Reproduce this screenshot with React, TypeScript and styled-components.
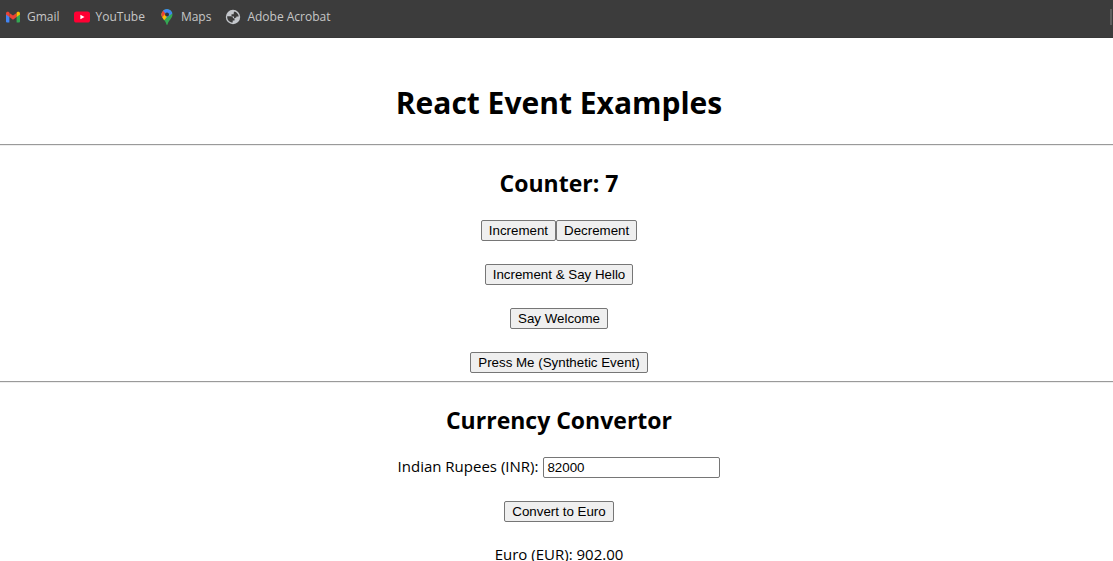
import React, { useState } from "react";
import styled, { createGlobalStyle } from "styled-components";

const GlobalStyle = createGlobalStyle`
  * { box-sizing: border-box; }
  body {
    margin: 0;
    background: #fff;
    color: #000;
    font-family: "Open Sans", "Noto Sans", sans-serif;
    font-size: 15px;
    line-height: 18px;
  }
`;

const BookmarksBar = styled.nav`
  display: flex;
  align-items: flex-start;
  justify-content: space-between;
  height: 38px;
  padding: 9px 1px 0 5px;
  background: #3c3c3c;
  border-bottom: 1px solid #383838;
`;

const BookmarkList = styled.div`
  display: flex;
  gap: 14px;
`;

const Bookmark = styled.a`
  display: flex;
  align-items: center;
  gap: 6px;
  height: 16px;
  color: #c7c7c7;
  font-family: "Open Sans", "Noto Sans", sans-serif;
  font-size: 12px;
  line-height: 16px;
  text-decoration: none;
  white-space: nowrap;

  svg { flex: none; }
`;

const BarDivider = styled.span`
  width: 2px;
  height: 16px;
  background: #5e5e5e;
`;

const Page = styled.main`
  padding-top: 43px;
`;

const Content = styled.div`
  display: flex;
  flex-direction: column;
  align-items: center;
  padding-left: 5px;
`;

const Title = styled.h1`
  margin: 0 0 19px;
  font-size: 30px;
  line-height: 44px;
`;

const Heading = styled.h2`
  margin: 0 0 21px;
  font-size: 23px;
  line-height: 32px;
`;

const Rule = styled.hr`
  height: 2px;
  margin: 0 0 21px;
  border: 0;
  border-top: 1px solid #9a9a9a;
  border-bottom: 1px solid #eee;
`;

const Stack = styled.div<{ $end: number }>`
  display: flex;
  flex-direction: column;
  align-items: center;
  gap: 23px;
  padding-bottom: ${(p) => p.$end}px;
`;

const Row = styled.div`
  display: flex;
  align-items: center;
`;

const Button = styled.button`
  height: 21px;
  padding: 0 7px;
  border: 1px solid #767676;
  border-radius: 2px;
  background: #efefef;
  color: #000;
  font-family: "Liberation Sans", Arial, sans-serif;
  line-height: 19px;
`;

const Field = styled.div`
  display: flex;
  align-items: flex-start;
  gap: 5px;
  height: 21px;
`;

const Input = styled.input`
  width: 177px;
  height: 21px;
  padding: 1px 3px;
  border: 1px solid #767676;
  border-radius: 2px;
  background: #fff;
  color: #000;
  font-family: "Liberation Sans", Arial, sans-serif;
`;

const Result = styled.p`
  margin: 0;
`;

const GmailIcon = () => (
  <svg width="16" height="16" viewBox="0 0 16 16" aria-hidden="true">
    <path d="M1 4.5 4.4 7v6.5H2a1 1 0 0 1-1-1z" fill="#4285f4" />
    <path d="M15 4.5 11.6 7v6.5H14a1 1 0 0 0 1-1z" fill="#34a853" />
    <path d="M4.4 3.9 8 6.6l3.6-2.7V8L8 10.7 4.4 8z" fill="#ea4335" />
    <path d="M1 4.6c0-1.8 1.8-2.3 3-1.4l.4.3V8L1 5.5z" fill="#ea4335" />
    <path d="M15 4.6c0-1.8-1.8-2.3-3-1.4l-.4.3V8L15 5.5z" fill="#fbbc04" />
  </svg>
);

const YouTubeIcon = () => (
  <svg width="16" height="16" viewBox="0 0 16 16" aria-hidden="true">
    <rect y="2.5" width="16" height="11" rx="2.6" fill="#ff0033" />
    <path d="M6.4 5.7v4.6L10.5 8z" fill="#fff" />
  </svg>
);

const MapsIcon = () => (
  <svg width="16" height="16" viewBox="0 0 16 16" aria-hidden="true">
    <clipPath id="pin">
      <path d="M8 0a5.5 5.5 0 0 0-5.5 5.6c0 2 .9 3.2 2 4.6C6 12 7 13.3 7.4 15.2c.2.9 1 .9 1.2 0C9 13.3 10 12 11.5 10.2c1.1-1.4 2-2.6 2-4.6A5.5 5.5 0 0 0 8 0z" />
    </clipPath>
    <g clipPath="url(#pin)">
      <path d="M0 0h16v16H0z" fill="#34a853" />
      <path d="M0 4h8v4l-4 4.5H0z" fill="#fbbc04" />
      <path d="M0 0h5l2 4-4 4.5H0z" fill="#ea4335" />
      <path d="M3.8 1.5 6.5 4.5 10 5l3-3.5L9 0H5z" fill="#4285f4" />
      <path d="M13 1.5 9 6 6.5 9.5 14 4z" fill="#4285f4" />
    </g>
    <circle cx="8" cy="5.6" r="2" fill="#30343b" />
  </svg>
);

const GlobeIcon = () => (
  <svg width="16" height="16" viewBox="0 0 16 16" aria-hidden="true">
    <circle cx="8" cy="8" r="7.2" fill="#c4c7cc" />
    <path d="M2.2 7.2h3.5c1.5 0 2.3.8 2.3 2h1.5v2.3H7.7v2.1C4.5 13.5 2.2 11 2.2 8z" fill="#3c3c3c" />
    <path d="M9.5 2.4c2.3.7 4 2.6 4.2 5.1h-2.2c0 1-.6 1.4-1.4 1.4H9V7.5H6.5V5.2h2.2V3.8z" fill="#3c3c3c" />
  </svg>
);

const bookmarks = [
  { label: "Gmail", icon: <GmailIcon /> },
  { label: "YouTube", icon: <YouTubeIcon /> },
  { label: "Maps", icon: <MapsIcon /> },
  { label: "Adobe Acrobat", icon: <GlobeIcon /> },
];

export default function App() {
  const [count, setCount] = useState(7);
  const [rupees, setRupees] = useState("82000");
  const [euro, setEuro] = useState("902.00");

  return (
    <>
      <GlobalStyle />
      <BookmarksBar aria-label="Bookmarks">
        <BookmarkList>
          {bookmarks.map((b) => (
            <Bookmark key={b.label} href="#">
              {b.icon}
              {b.label}
            </Bookmark>
          ))}
        </BookmarkList>
        <BarDivider />
      </BookmarksBar>
      <Page>
        <Content>
          <Title>React Event Examples</Title>
        </Content>
        <Rule />
        <Content>
          <Heading>Counter: {count}</Heading>
          <Stack $end={8}>
            <Row>
              <Button onClick={() => setCount(count + 1)}>Increment</Button>
              <Button onClick={() => setCount(count - 1)}>Decrement</Button>
            </Row>
            <Button onClick={() => setCount(count + 1)}>Increment &amp; Say Hello</Button>
            <Button>Say Welcome</Button>
            <Button>Press Me (Synthetic Event)</Button>
          </Stack>
        </Content>
        <Rule />
        <Content>
          <Heading>Currency Convertor</Heading>
          <Stack $end={0}>
            <Field>
              <label htmlFor="inr">Indian Rupees (INR):</label>
              <Input id="inr" value={rupees} onChange={(e) => setRupees(e.target.value)} />
            </Field>
            <Button onClick={() => setEuro((Number(rupees) * 0.011).toFixed(2))}>
              Convert to Euro
            </Button>
            <Result>Euro (EUR): {euro}</Result>
          </Stack>
        </Content>
      </Page>
    </>
  );
}
